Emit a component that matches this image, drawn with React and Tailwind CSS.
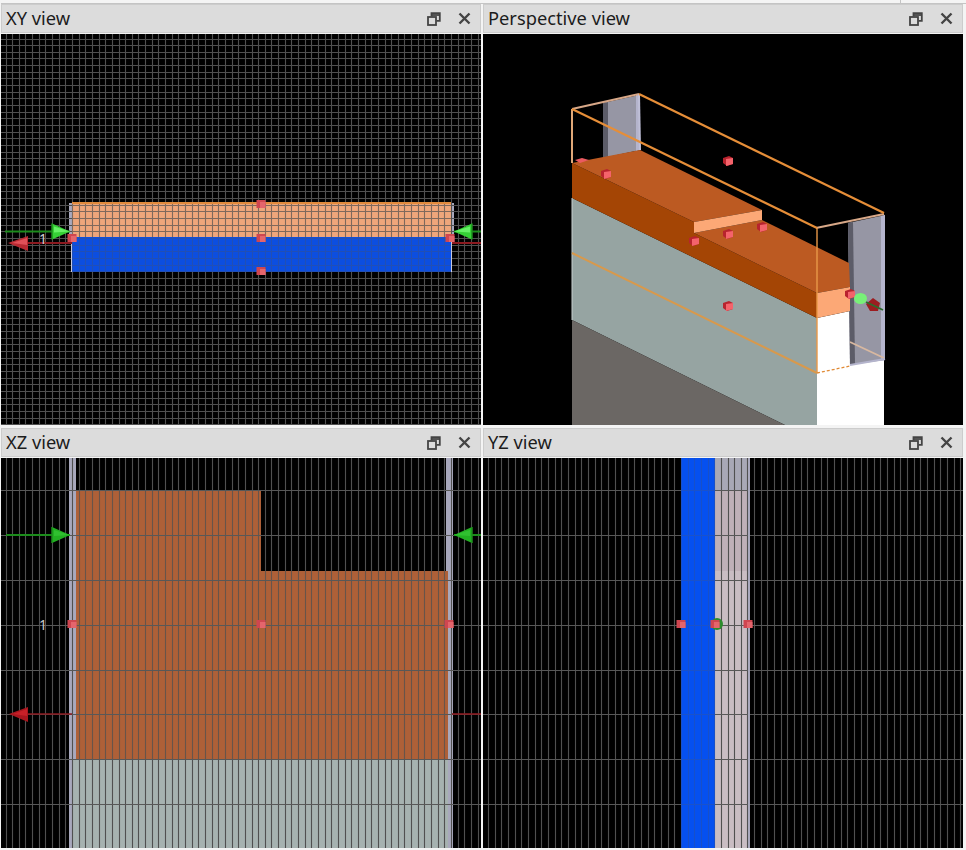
const range = (a, b) => Array.from({ length: b - a + 1 }, (_, i) => a + i);
const S = 379 / 57;
const GRID = "#4a4a4a";

function VLines({ y1, y2, x0 = 72, from = -11, to = 63, color = GRID }) {
  return range(from, to).map((k) => {
    const x = Math.round(x0 + k * S) + 0.5;
    return <line key={"v" + k} x1={x} x2={x} y1={y1} y2={y2} stroke={color} strokeWidth="1.1" />;
  });
}
function HLines({ ys, x1, x2, color = GRID }) {
  return ys.map((y, i) => (
    <line key={"h" + i} x1={x1} x2={x2} y1={Math.round(y) + 0.5} y2={Math.round(y) + 0.5} stroke={color} strokeWidth="1.1" />
  ));
}
function Marker({ x, y }) {
  return (
    <g>
      <rect x={x - 4.5} y={y - 4} width="9" height="8" fill="#cf4650" />
      <rect x={x - 1} y={y - 2} width="5.5" height="6" fill="#e4656c" />
    </g>
  );
}
function Cube({ x, y }) {
  return (
    <g>
      <polygon points={`${x - 5},${y - 3} ${x + 1},${y - 5} ${x + 5},${y - 3} ${x + 5},${y + 3} ${x - 1},${y + 5} ${x - 5},${y + 2}`} fill="#b8232e" />
      <polygon points={`${x - 2},${y - 2} ${x + 5},${y - 3} ${x + 5},${y + 3} ${x - 2},${y + 5}`} fill="#f4636b" />
    </g>
  );
}
function Arrow({ x, y, dir, light, mid, dark, tail }) {
  const tip = x + dir * 18;
  return (
    <g>
      <line x1={tail} x2={tip} y1={y} y2={y} stroke={dark} strokeWidth="2" />
      <polygon points={`${x},${y - 8} ${tip},${y} ${x},${y + 8}`} fill={mid} />
      <polygon points={`${x + dir * 2},${y - 5} ${tip},${y} ${x + dir * 2},${y + 1}`} fill={light} />
      <line x1={x} x2={x} y1={y - 8} y2={y + 8} stroke={dark} strokeWidth="1.5" />
    </g>
  );
}
function Panel({ title, viewBox, children }) {
  return (
    <div className="flex min-h-0 flex-col">
      <div className="flex h-[29px] shrink-0 items-center justify-between border border-[#cccccc] bg-[#dcdcdc] pl-1 pr-[9px]">
        <span className="font-['Noto_Sans',sans-serif] text-[18.3px] leading-none text-[#1c1c1c]">{title}</span>
        <div className="flex items-center gap-[17px]">
          <svg width="14" height="14" viewBox="0 0 14 14" fill="none" stroke="#444" strokeWidth="1.8">
            <rect x="1" y="5" width="8" height="8" />
            <path d="M4.5 4.5V1.2h8.3v7.6H9.5" />
            <path d="M4.5 3h8" />
          </svg>
          <svg width="13" height="13" viewBox="0 0 13 13" stroke="#444" strokeWidth="2.4">
            <path d="M1.5 1.5l10 10M11.5 1.5l-10 10" />
          </svg>
        </div>
      </div>
      <svg className="mt-[1px] block min-h-0 w-full flex-1 bg-black" viewBox={viewBox} preserveAspectRatio="none">
        {children}
      </svg>
    </div>
  );
}

function XYView() {
  const ys = range(-31, 28).map((k) => 238 + k * S);
  return (
    <Panel title="XY view" viewBox="1 34 480 391">
      <rect x="69" y="203" width="4" height="34" fill="#a9a9bd" />
      <rect x="450" y="203" width="4" height="34" fill="#a9a9bd" />
      <rect x="72" y="203" width="379" height="34" fill="#eea67c" />
      <rect x="72" y="237" width="379" height="35" fill="#0d4fe0" />
      <VLines y1={34} y2={426} color="#505050" />
      <HLines ys={ys} x1={1} x2={481} color="#505050" />
      <rect x="72" y="203" width="379" height="34" fill="#eea67c" opacity="0.3" />
      <rect x="72" y="202" width="379" height="2" fill="#e08a3c" />
      <rect x="72" y="237" width="379" height="35" fill="#0d4fe0" opacity="0.7" />
      <line x1="71.5" x2="71.5" y1="237" y2="272" stroke="#c8c8dc" />
      <line x1="451.5" x2="451.5" y1="237" y2="272" stroke="#c8c8dc" />
      <Arrow x={52} y={231.5} dir={1} light="#66f066" mid="#36d036" dark="#1c8c1c" tail={5} />
      <Arrow x={472} y={231.5} dir={-1} light="#66f066" mid="#36d036" dark="#1c8c1c" tail={481} />
      <line x1="28" x2="72" y1="243" y2="243" stroke="#8c1a20" strokeWidth="2" />
      <polygon points="8,243 28,236 28,251" fill="#b82a32" />
      <polygon points="12,243 27,238 27,245" fill="#e05058" />
      <line x1="452" x2="481" y1="243" y2="243" stroke="#8c1a20" strokeWidth="2" />
      <text x="39" y="244" fill="#d0d0d0" fontSize="14" fontFamily="'Noto Sans', sans-serif">1</text>
      <Marker x={72} y={238} />
      <Marker x={450} y={238} />
      <Marker x={261} y={204} />
      <Marker x={261} y={238} />
      <Marker x={261} y={271} />
    </Panel>
  );
}

function PerspectiveView() {
  return (
    <Panel title="Perspective view" viewBox="483 34 480 391">
      <polygon points="603,103 639,95 640,150 603,158" fill="#9696a4" />
      <polygon points="603,103 608,102 608,157 603,158" fill="#5c5c68" />
      <polygon points="636,95 640,95 640,150 636,151" fill="#b4b4cc" />
      <polygon points="572,198 817,318 817,426 787,426 572,320" fill="#96a4a2" />
      <polygon points="572,320 787,426 572,426" fill="#6b6764" />
      <polygon points="817,318 850,311 850,365 884,359 884,426 817,426" fill="#ffffff" />
      <polygon points="848,223 885,215 885,360 850,365" fill="#9696a4" />
      <polygon points="848,223 853,222 855,364 850,365" fill="#5c5c68" />
      <polygon points="881,216 885,215 885,360 881,361" fill="#b4b4cc" />
      <polygon points="572,163 694,222 694,233 817,293 817,318 572,198" fill="#a44505" />
      <polygon points="572,163 640,150 762,210 694,222" fill="#bc5a22" />
      <polygon points="694,233 762,220 849,263 850,287 817,293" fill="#bc5a22" />
      <polygon points="694,222 762,210 762,220 694,233" fill="#fca876" />
      <polygon points="817,293 850,287 850,311 817,318" fill="#fca876" />
      <line x1="572" y1="198" x2="572" y2="320" stroke="#c8d0d0" />
      <line x1="572" y1="109" x2="639" y2="94" stroke="#d8a888" strokeWidth="2" />
      <line x1="816" y1="228" x2="884" y2="214" stroke="#d8a888" strokeWidth="2" />
      <line x1="572" y1="109" x2="572" y2="163" stroke="#e0a878" strokeWidth="2" />
      <line x1="639" y1="94" x2="640" y2="150" stroke="#c0c0d8" strokeWidth="2" />
      <line x1="572" y1="109" x2="817" y2="228" stroke="#e68e38" strokeWidth="2.2" />
      <line x1="639" y1="94" x2="884" y2="213" stroke="#e68e38" strokeWidth="2.2" />
      <line x1="817" y1="228" x2="817" y2="373" stroke="#e89848" strokeWidth="1.4" />
      <line x1="572" y1="253" x2="817" y2="373" stroke="#d8994c" strokeWidth="2" />
      <line x1="817" y1="373" x2="850" y2="366" stroke="#e08a36" strokeWidth="1.3" strokeDasharray="3 2" />
      <line x1="850" y1="342" x2="884" y2="358" stroke="#d8b8a0" strokeWidth="1.8" />
      <line x1="850" y1="365" x2="885" y2="359" stroke="#b4b4cc" strokeWidth="2" />
      <polygon points="575,160 582,158 589,160 580,163" fill="#ea5a60" />
      <Cube x={606} y={174} />
      <Cube x={728} y={161} />
      <Cube x={694} y={241} />
      <Cube x={728} y={234} />
      <Cube x={762} y={227} />
      <Cube x={728} y={306} />
      <Cube x={850} y={294} />
      <polygon points="866,304 873,298 880,303 878,311 870,311" fill="#9c1c20" />
      <line x1="866" y1="302" x2="883" y2="310" stroke="#2c6c2c" strokeWidth="1.8" />
      <ellipse cx="860.5" cy="298.5" rx="6.5" ry="5.5" fill="#78f078" />
    </Panel>
  );
}

const ZY = [490, 535, 580, 625, 670, 714, 759, 804];

function XZView() {
  return (
    <Panel title="XZ view" viewBox="1 458 480 390">
      <rect x="69" y="458" width="7" height="391" fill="#a8a8bc" />
      <rect x="446" y="458" width="7" height="391" fill="#a8a8bc" />
      <rect x="72" y="759" width="376" height="90" fill="#a6b2b0" />
      <polygon points="76,490 261,490 261,571 448,571 448,759 76,759" fill="#ae6038" />
      <VLines y1={458} y2={849} color="#505050" />
      <polygon points="76,490 261,490 261,571 448,571 448,759 76,759" fill="#ae6038" opacity="0.25" />
      <HLines ys={ZY} x1={1} x2={481} color="#585858" />
      <Arrow x={52} y={535} dir={1} light="#30c030" mid="#22b022" dark="#1c8c1c" tail={6} />
      <Arrow x={472} y={535} dir={-1} light="#30c030" mid="#22b022" dark="#1c8c1c" tail={481} />
      <line x1="28" x2="72" y1="714" y2="714" stroke="#8c1a20" strokeWidth="1.6" />
      <polygon points="9,714 28,707 28,722" fill="#a8161e" />
      <polygon points="13,714 27,709 27,716" fill="#c82028" />
      <line x1="452" x2="481" y1="714" y2="714" stroke="#8c1a20" strokeWidth="1.6" />
      <text x="39" y="630" fill="#c8c8c8" fontSize="14" fontFamily="'Noto Sans', sans-serif">1</text>
      <Marker x={72} y={624} />
      <Marker x={261} y={624} />
      <Marker x={449} y={624} />
    </Panel>
  );
}

function YZView() {
  return (
    <Panel title="YZ view" viewBox="483 458 480 390">
      <rect x="681" y="458" width="34" height="391" fill="#0650f0" />
      <rect x="715" y="458" width="34" height="32" fill="#a8a8b6" />
      <rect x="715" y="490" width="34" height="81" fill="#bfb0b8" />
      <rect x="715" y="571" width="34" height="278" fill="#c9bdc3" />
      <VLines y1={458} y2={849} x0={681} from={-29} to={42} color="#505050" />
      <HLines ys={ZY} x1={483} x2={964} color="#585858" />
      <rect x="681" y="458" width="34" height="391" fill="#0650f0" opacity="0.75" />
      <rect x="748" y="458" width="2" height="391" fill="#a8a8bc" />
      <circle cx="717" cy="624" r="6" fill="#2c8c2c" />
      <Marker x={681} y={624} />
      <Marker x={715} y={624} />
      <Marker x={748} y={624} />
    </Panel>
  );
}

export default function App() {
  return (
    <div className="relative h-[850px] w-[966px] overflow-hidden bg-[#f4f4f4] pl-[1px] pt-[3px]">
      <div className="absolute left-[900px] top-0 h-[3px] w-px bg-[#c4c4c4]" />
      <div className="grid grid-cols-[480px_480px] grid-rows-[421px_420px] gap-x-[2px] gap-y-[3px] border-t border-[#c4c4c4]">
        <XYView />
        <PerspectiveView />
        <XZView />
        <YZView />
      </div>
    </div>
  );
}
